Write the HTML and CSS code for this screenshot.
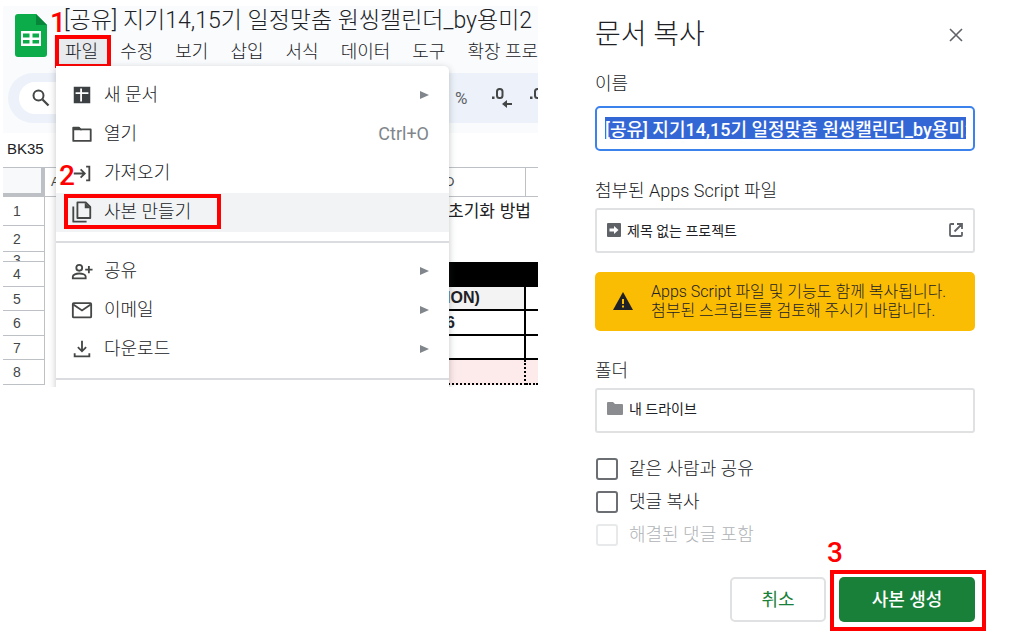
FILE: index.html
```html
<!DOCTYPE html>
<html lang="ko">
<head>
<meta charset="utf-8">
<title>문서 복사</title>
<link rel="stylesheet" href="styles.css">
</head>
<body>
<main class="guide">
  <section class="sheet">
    <header class="sheet-head">
      <div class="brand">
        <svg class="logo" viewBox="0 0 32 43" aria-hidden="true"><path fill="#0dac4b" d="M3 0h18l11 11v29a3 3 0 0 1-3 3H3a3 3 0 0 1-3-3V3a3 3 0 0 1 3-3z"/><path fill="#07863a" d="M21 0l11 11H21z"/><path fill="#fff" fill-rule="evenodd" d="M6 17h20v15H6zM8 19.500h6.500v4H8zM17.500 19.500H24v4h-6.500zM8 26h6.500v3.500H8zM17.500 26H24v3.500h-6.500z"/></svg>
        <div class="brand-text">
          <h1 class="doc-title">[공유] 지기14,15기 일정맞춤 원씽캘린더_by용미2</h1>
          <nav class="menubar">
            <button class="menubar-item is-open">파일<span class="frame frame-file"></span></button>
            <button class="menubar-item">수정</button>
            <button class="menubar-item">보기</button>
            <button class="menubar-item">삽입</button>
            <button class="menubar-item">서식</button>
            <button class="menubar-item">데이터</button>
            <button class="menubar-item">도구</button>
            <button class="menubar-item">확장 프로</button>
          </nav>
        </div>
      </div>
      <div class="toolbar">
        <button class="search" aria-label="검색"><svg viewBox="0 0 18 18" aria-hidden="true"><circle cx="6.500" cy="6.500" r="5" fill="none" stroke="#444746" stroke-width="2"/><path d="M10.500 10.500l6 6" stroke="#444746" stroke-width="2.300"/></svg></button>
        <div class="formats">
          <button class="format percent">%</button>
          <button class="format decimals" aria-label="소수점 이하 자릿수 감소"><svg viewBox="0 0 22 22" aria-hidden="true"><rect x="1" y="9.500" width="2.500" height="2.500" fill="#444746"/><rect x="6" y="2" width="5.500" height="9" rx="2.500" fill="none" stroke="#444746" stroke-width="2"/><path d="M21 17h-7" fill="none" stroke="#444746" stroke-width="2"/><path fill="#444746" d="M11 17l5-4v8z"/></svg></button>
          <button class="format decimals" aria-label="소수점 이하 자릿수 증가"><svg viewBox="0 0 22 22" aria-hidden="true"><rect x="1" y="9.500" width="2.500" height="2.500" fill="#444746"/><rect x="6" y="2" width="5.500" height="9" rx="2.500" fill="none" stroke="#444746" stroke-width="2"/></svg></button>
        </div>
      </div>
    </header>
    <div class="namebox">BK35</div>
    <table class="grid">
      <colgroup><col class="col-num"><col class="col-a"><col class="col-d"><col></colgroup>
      <thead><tr><th class="corner"></th><th class="col-first">A</th><th class="col-label">D</th><th></th></tr></thead>
      <tbody>
        <tr class="r1"><th>1</th><td></td><td class="spill" colspan="2">초기화 방법</td></tr>
        <tr class="r2"><th>2</th><td></td><td></td><td></td></tr>
        <tr class="r3"><th><div class="sliver">3</div></th><td></td><td></td><td></td></tr>
        <tr class="r4"><th>4</th><td></td><td class="black" colspan="2"></td></tr>
        <tr class="r5"><th>5</th><td></td><td class="boxed shade">ION)</td><td class="under"></td></tr>
        <tr class="r6"><th>6</th><td></td><td class="boxed">6</td><td class="under"></td></tr>
        <tr class="r7"><th>7</th><td></td><td class="boxed"></td><td class="under"></td></tr>
        <tr class="r8"><th>8</th><td></td><td class="pink dotted"></td><td class="pink"></td></tr>
      </tbody>
    </table>
    <div class="menu">
      <button class="menu-item"><svg viewBox="0 0 24 24" aria-hidden="true"><path fill="#3c4043" fill-rule="evenodd" d="M3 3h18v18H3zM10 5v4H5v2h5v8h2v-8h7V9h-7V5z"/></svg><span>새 문서</span><span class="arrow"></span></button>
      <button class="menu-item"><svg viewBox="0 0 24 24" aria-hidden="true"><path fill="none" stroke="#444746" stroke-width="2" stroke-linejoin="round" d="M2.500 5h6l2 2h11v12.500h-19z"/><path fill="#444746" d="M2 4.500h7l3 3.500H2z"/></svg><span>열기</span><kbd class="shortcut">Ctrl+O</kbd></button>
      <button class="menu-item"><svg viewBox="0 0 24 24" aria-hidden="true"><path fill="none" stroke="#444746" stroke-width="2" d="M3 12.500h11M10.500 8l4.500 4.500-4.500 4.500M16.500 5H20v15h-3.500"/></svg><span>가져오기</span></button>
      <button class="menu-item is-active"><svg viewBox="0 0 24 24" aria-hidden="true"><path fill="none" stroke="#444746" stroke-width="2" stroke-linejoin="round" d="M7 1.500h9l5 5v12H7zM2.500 6v16.500H17"/><path fill="#444746" d="M15 1.500l6.500 6.500H15z"/></svg><span>사본 만들기</span><span class="frame frame-copy"></span></button>
      <hr class="menu-line">
      <button class="menu-item"><svg viewBox="0 0 24 24" aria-hidden="true"><circle cx="9" cy="8.500" r="3.200" fill="none" stroke="#444746" stroke-width="2"/><path fill="none" stroke="#444746" stroke-width="2" d="M2 20v-2c0-2 3.500-3.300 7-3.300s7 1.300 7 3.300v2zM19.500 6.500v8M15.500 10.500h8"/></svg><span>공유</span><span class="arrow"></span></button>
      <button class="menu-item"><svg viewBox="0 0 24 24" aria-hidden="true"><rect x="2" y="4.500" width="20" height="15.500" rx="1" fill="none" stroke="#444746" stroke-width="2"/><path fill="none" stroke="#444746" stroke-width="2" d="M2.500 6l9.500 6.500L21.500 6"/></svg><span>이메일</span><span class="arrow"></span></button>
      <button class="menu-item"><svg viewBox="0 0 24 24" aria-hidden="true"><path fill="none" stroke="#444746" stroke-width="2" d="M12 3v11.500M7.500 10l4.500 4.500 4.500-4.500M4 16.500v3.500h16v-3.500"/></svg><span>다운로드</span><span class="arrow"></span></button>
      <hr class="menu-line">
    </div>
    <span class="step step-1">1</span>
    <span class="step step-2">2</span>
  </section>

  <form class="dialog">
    <div class="dialog-head">
      <h2 class="dialog-title">문서 복사</h2>
      <button type="button" class="close" aria-label="닫기"><svg viewBox="0 0 14 14" aria-hidden="true"><path d="M1 1l12 12M13 1L1 13" stroke="#5f6368" stroke-width="1.600"/></svg></button>
    </div>
    <label class="label" for="name">이름</label>
    <input class="name" id="name" type="text" value="[공유] 지기14,15기 일정맞춤 원씽캘린더_by용미2">
    <p class="label label-script">첨부된 Apps Script 파일</p>
    <a class="box" href="#script">
      <svg class="box-icon" viewBox="0 0 14 14" aria-hidden="true"><rect width="14" height="14" rx="1" fill="#5f6368"/><path fill="#fff" d="M2.500 5.500H7V3l4.500 4L7 11V8.500H2.500z"/></svg>
      <span>제목 없는 프로젝트</span>
      <svg class="open-icon" viewBox="0 0 14 14" aria-hidden="true"><path fill="none" stroke="#5f6368" stroke-width="1.800" d="M5 1H2a1 1 0 0 0-1 1v10a1 1 0 0 0 1 1h10a1 1 0 0 0 1-1V9M8 1h5v5M13 1L5.500 8.500"/></svg>
    </a>
    <div class="alert">
      <svg class="alert-icon" viewBox="0 0 20 18" aria-hidden="true"><path fill="#202124" d="M10 0l10 18H0z"/><path fill="#fbbc04" d="M9 7h2v5H9zM9 13.500h2v2H9z"/></svg>
      <p class="alert-text">Apps Script 파일 및 기능도 함께 복사됩니다.<br>첨부된 스크립트를 검토해 주시기 바랍니다.</p>
    </div>
    <p class="label label-folder">폴더</p>
    <button type="button" class="box folder">
      <svg class="folder-icon" viewBox="0 0 16 13" aria-hidden="true"><path fill="#8a8c8f" d="M1 0h5l2 2h7a1 1 0 0 1 1 1v9a1 1 0 0 1-1 1H1a1 1 0 0 1-1-1V1a1 1 0 0 1 1-1z"/></svg>
      <span>내 드라이브</span>
    </button>
    <div class="checks">
      <label class="check"><input type="checkbox"><span>같은 사람과 공유</span></label>
      <label class="check"><input type="checkbox"><span>댓글 복사</span></label>
      <label class="check is-off"><input type="checkbox" disabled><span>해결된 댓글 포함</span></label>
    </div>
    <div class="actions">
      <button type="button" class="btn cancel">취소</button>
      <button type="button" class="btn create">사본 생성<span class="frame frame-create"></span><span class="step step-3">3</span></button>
    </div>
  </form>
</main>
</body>
</html>
```
FILE: styles.css
```css
* { box-sizing: border-box; }

body {
  margin: 0;
  background: #fff;
  color: #202124;
  font-family: Roboto, "Noto Sans CJK KR", sans-serif;
  font-size: 18px;
  font-weight: 300;
}

h1, h2, p { margin: 0; font-weight: inherit; }

button {
  padding: 0;
  border: 0;
  background: none;
  color: inherit;
  font: inherit;
}

svg { display: block; flex: none; }

.guide {
  display: grid;
  grid-template-columns: 535fr 380fr;
  gap: 57px;
  align-items: start;
  padding: 6px 37px 15px 3px;
}

/* Spreadsheet */
.sheet { position: relative; overflow: hidden; height: 381px; }
.sheet-head { height: 127px; background: #f9fbfd; }
.brand { display: flex; gap: 7px; height: 67px; padding-left: 12px; }
.logo { width: 32px; height: 43px; margin-top: 8px; }
.brand-text { min-width: 0; }
.doc-title {
  padding-left: 10px;
  font-size: 23px;
  line-height: 30px;
  white-space: nowrap;
}
.menubar { display: flex; }
.menubar-item {
  position: relative;
  flex: none;
  height: 31px;
  padding: 0 11px;
  line-height: 31px;
  white-space: nowrap;
}
.is-open { background: #e8eaed; }

.toolbar {
  display: flex;
  justify-content: space-between;
  align-items: center;
  height: 50px;
  margin-left: 5px;
  border-radius: 25px 0 0 25px;
  background: #edf2fa;
  overflow: hidden;
}
.search {
  width: 80px;
  height: 32px;
  margin-left: 11px;
  padding-left: 13px;
  border-radius: 16px;
  background: #fff;
}
.search svg { width: 18px; height: 18px; }
.formats { display: flex; align-items: center; gap: 16px; width: 83px; }
.format { flex: none; color: #5f6368; font-size: 17px; font-weight: 400; }
.percent { width: 20px; text-align: left; }
.decimals svg { width: 22px; height: 22px; }

.namebox {
  height: 34px;
  padding-left: 4px;
  font-family: "Liberation Sans", sans-serif;
  font-size: 15px;
  font-weight: 400;
  line-height: 32px;
}

.grid {
  width: 100%;
  table-layout: fixed;
  border-collapse: separate;
  border-spacing: 0;
  font-family: "Liberation Sans", "Noto Sans CJK KR", sans-serif;
  font-size: 16px;
  font-weight: 400;
  line-height: 20px;
}
.col-num { width: 42px; }
.col-a { width: 400px; }
.col-d { width: 81px; }
.grid th, .grid td { padding: 0; white-space: nowrap; text-align: left; }
.grid thead th {
  height: 30px;
  border-top: 1px solid #bdc1c6;
  border-bottom: 1px solid #bdc1c6;
  color: #444746;
  font-size: 13px;
  font-weight: 400;
}
.grid thead .corner {
  border-right: 4px solid #bdc1c6;
  border-bottom: 4px solid #bdc1c6;
  background: #f8f9fa;
}
.grid thead .col-first { padding-left: 6px; }
.grid thead .col-label { border-right: 1px solid #bdc1c6; }
.grid tbody th {
  padding-right: 13px;
  border-right: 1px solid #bdc1c6;
  border-bottom: 1px solid #bdc1c6;
  color: #444746;
  font-size: 14px;
  font-weight: 400;
  text-align: center;
}
.r1 { height: 29px; }
.r2 { height: 26px; }
.r3 { height: 10px; }
.r4, .r6 { height: 25px; }
.r5, .r7 { height: 24px; }
.r8 { height: 25px; }
.sliver { height: 9px; overflow: hidden; line-height: 16px; }
.grid .spill { padding-left: 3px; font-size: 17px; }
.black { background: #000; }
.grid .boxed {
  padding-left: 1px;
  border-right: 2px solid #000;
  border-bottom: 2px solid #000;
  font-weight: 700;
}
.grid .shade { background: #f3f3f3; }
.under { border-bottom: 2px solid #000; }
.pink { border-bottom: 2px dotted #000; background: #fdeaea; }
.dotted { border-right: 2px dotted #000; }

/* File menu */
.menu {
  position: absolute;
  top: 60px;
  left: 53px;
  width: 393px;
  padding: 10px 0;
  border-radius: 0 5px 5px 5px;
  background: #fff;
  box-shadow: 0 2px 7px rgba(60, 64, 67, 0.3);
}
.menu-item {
  position: relative;
  display: flex;
  align-items: center;
  gap: 11px;
  width: 100%;
  height: 39px;
  padding: 0 20px 2px 15px;
  line-height: 24px;
  text-align: left;
}
.menu-item svg { width: 22px; height: 22px; }
.is-active { background: #f1f3f4; }
.menu-line { height: 2px; margin: 9px 0; border: 0; background: #dadce0; }
.arrow {
  margin-left: auto;
  border: solid transparent;
  border-width: 4px 0 4px 9px;
  border-left-color: #80868b;
}
.shortcut {
  margin-left: auto;
  color: #80868b;
  font-family: Roboto, sans-serif;
  font-weight: 400;
}

/* Walkthrough marks */
.frame { position: absolute; border: 4px solid #f00; }
.frame-file { inset: -1px -2px -1px 1px; }
.frame-copy { inset: 1px auto 3px 8px; width: 157px; }
.frame-create { inset: -7px -11px -9px -9px; }
.step {
  position: absolute;
  color: #f00;
  font-size: 28px;
  font-weight: 500;
  line-height: 28px;
}
.step-1 { top: 3px; left: 47px; }
.step-2 { top: 156px; left: 56px; }
.step-3 { top: -38px; left: -12px; }

/* Copy dialog */
.dialog { display: flex; flex-direction: column; padding-top: 8px; }
.dialog-head { display: flex; justify-content: space-between; align-items: center; height: 42px; }
.dialog-title { font-size: 28px; line-height: 42px; }
.close { margin-right: 12px; }
.close svg { width: 14px; height: 14px; }
.label { margin-top: 16px; line-height: 24px; }
.name {
  width: 100%;
  height: 45px;
  margin-top: 10px;
  padding: 9px 7px 10px 8px;
  border: 2px solid #3b82ec;
  border-radius: 5px;
  outline: 0;
  background: #3367d6 content-box;
  color: #fff;
  font: 500 18px/22px Roboto, "Noto Sans CJK KR", sans-serif;
}
.label-script { margin-top: 28px; }
.box {
  display: flex;
  align-items: center;
  gap: 6px;
  width: 100%;
  height: 45px;
  margin-top: 5px;
  padding: 0 10px 2px;
  border: 2px solid #dfe1e3;
  border-radius: 3px;
  color: inherit;
  font-size: 14px;
  font-weight: 400;
  text-decoration: none;
}
.box-icon, .open-icon { width: 14px; height: 14px; }
.open-icon { margin-left: auto; }
.folder { padding-bottom: 5px; }
.folder-icon { width: 16px; height: 13px; }
.alert {
  display: flex;
  align-items: center;
  gap: 18px;
  height: 59px;
  margin-top: 19px;
  padding: 0 0 2px 18px;
  border-radius: 5px;
  background: #fbbc04;
}
.alert-icon { width: 20px; height: 18px; }
.alert-text { font-size: 16px; line-height: 19px; white-space: nowrap; }
.label-folder { margin-top: 28px; }
.checks { display: grid; gap: 9px; margin-top: 24px; padding-left: 1px; }
.check { display: flex; align-items: center; gap: 11px; height: 24px; line-height: 24px; }
.check input {
  appearance: none;
  width: 22px;
  height: 22px;
  margin: 0;
  border: 2px solid #6b6e72;
  border-radius: 3px;
}
.is-off { color: #b0b3b6; }
.is-off input { border-color: #e8e9eb; }
.actions { display: flex; justify-content: flex-end; gap: 13px; margin-top: 30px; }
.btn { position: relative; height: 45px; padding-bottom: 4px; border-radius: 5px; font-weight: 500; }
.cancel { width: 96px; border: 2px solid #dfe1e3; color: #188038; font-weight: 400; }
.create { width: 136px; background: #188038; color: #fff; }
```
